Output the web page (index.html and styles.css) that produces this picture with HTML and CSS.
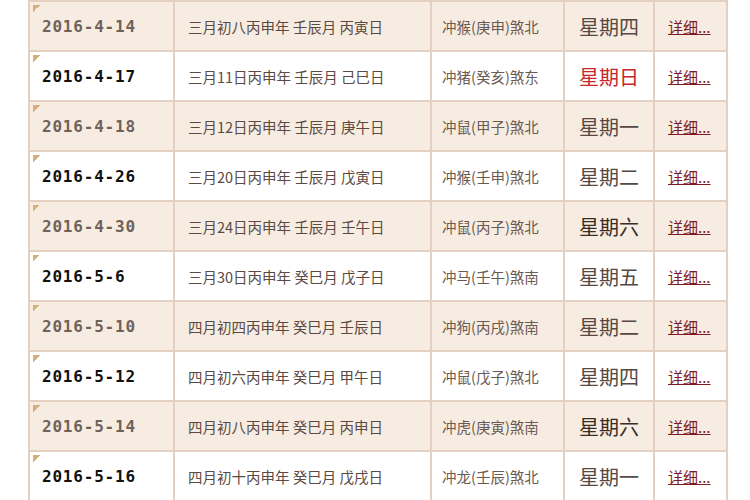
FILE: index.html
```html
<!DOCTYPE html>
<html lang="zh">
<head>
<meta charset="utf-8">
<title>吉日列表</title>
<link rel="stylesheet" href="styles.css">
</head>
<body>
<table class="days">
  <tbody>
    <tr class="odd"><td class="date">2016-4-14</td><td class="lunar">三月初八丙申年 壬辰月 丙寅日</td><td class="chong">冲猴(庚申)煞北</td><td class="week">星期四</td><td class="more"><a href="#">详细...</a></td></tr>
    <tr class="even"><td class="date">2016-4-17</td><td class="lunar">三月11日丙申年 壬辰月 己巳日</td><td class="chong">冲猪(癸亥)煞东</td><td class="week sun">星期日</td><td class="more"><a href="#">详细...</a></td></tr>
    <tr class="odd"><td class="date">2016-4-18</td><td class="lunar">三月12日丙申年 壬辰月 庚午日</td><td class="chong">冲鼠(甲子)煞北</td><td class="week">星期一</td><td class="more"><a href="#">详细...</a></td></tr>
    <tr class="even"><td class="date">2016-4-26</td><td class="lunar">三月20日丙申年 壬辰月 戊寅日</td><td class="chong">冲猴(壬申)煞北</td><td class="week">星期二</td><td class="more"><a href="#">详细...</a></td></tr>
    <tr class="odd"><td class="date">2016-4-30</td><td class="lunar">三月24日丙申年 壬辰月 壬午日</td><td class="chong">冲鼠(丙子)煞北</td><td class="week sat">星期六</td><td class="more"><a href="#">详细...</a></td></tr>
    <tr class="even"><td class="date">2016-5-6</td><td class="lunar">三月30日丙申年 癸巳月 戊子日</td><td class="chong">冲马(壬午)煞南</td><td class="week">星期五</td><td class="more"><a href="#">详细...</a></td></tr>
    <tr class="odd"><td class="date">2016-5-10</td><td class="lunar">四月初四丙申年 癸巳月 壬辰日</td><td class="chong">冲狗(丙戌)煞南</td><td class="week">星期二</td><td class="more"><a href="#">详细...</a></td></tr>
    <tr class="even"><td class="date">2016-5-12</td><td class="lunar">四月初六丙申年 癸巳月 甲午日</td><td class="chong">冲鼠(戊子)煞北</td><td class="week">星期四</td><td class="more"><a href="#">详细...</a></td></tr>
    <tr class="odd"><td class="date">2016-5-14</td><td class="lunar">四月初八丙申年 癸巳月 丙申日</td><td class="chong">冲虎(庚寅)煞南</td><td class="week sat">星期六</td><td class="more"><a href="#">详细...</a></td></tr>
    <tr class="even"><td class="date">2016-5-16</td><td class="lunar">四月初十丙申年 癸巳月 戊戌日</td><td class="chong">冲龙(壬辰)煞北</td><td class="week">星期一</td><td class="more"><a href="#">详细...</a></td></tr>
  </tbody>
</table>
</body>
</html>
```

FILE: styles.css
```css
html, body {
  margin: 0;
  padding: 0;
  background: #ffffff;
}

body {
  font-family: "Noto Sans CJK SC", "Noto Sans", sans-serif;
  color: #5b4a44;
}

.days {
  border-collapse: collapse;
  margin-left: 28px;
  width: 700px;
  table-layout: fixed;
}

.days td {
  border: 2px solid #e3d0c0;
  height: 48px;
  padding: 0 0 0 12px;
  vertical-align: middle;
  white-space: nowrap;
}

.odd td {
  background-color: #f6ece1;
}

.even td {
  background-color: #ffffff;
}

.days td.date {
  width: 131px;
  font-family: "DejaVu Sans Mono", monospace;
  font-weight: bold;
  font-size: 16px;
  letter-spacing: 0.8px;
  color: #111111;
  background-image: linear-gradient(135deg, #d6b07a 50%, transparent 50%);
  background-size: 7px 7px;
  background-position: 3px 3px;
  background-repeat: no-repeat;
}

.odd td.date {
  color: #6e625a;
}

.days td.lunar {
  width: 242px;
  font-size: 14.5px;
  padding-left: 13px;
}

.days td.chong {
  width: 121px;
  font-size: 14.5px;
  padding-left: 10px;
  color: #6a5a52;
}

.days td.week {
  width: 88px;
  font-size: 20px;
  padding-left: 0;
  text-align: center;
  color: #564842;
}

.days td.week.sun {
  color: #c8262b;
}

.days td.week.sat {
  color: #3a2c27;
}

.days td.more {
  font-size: 15px;
  padding-left: 13px;
}

.more a {
  color: #7d1b1e;
  text-decoration: underline;
}
```
